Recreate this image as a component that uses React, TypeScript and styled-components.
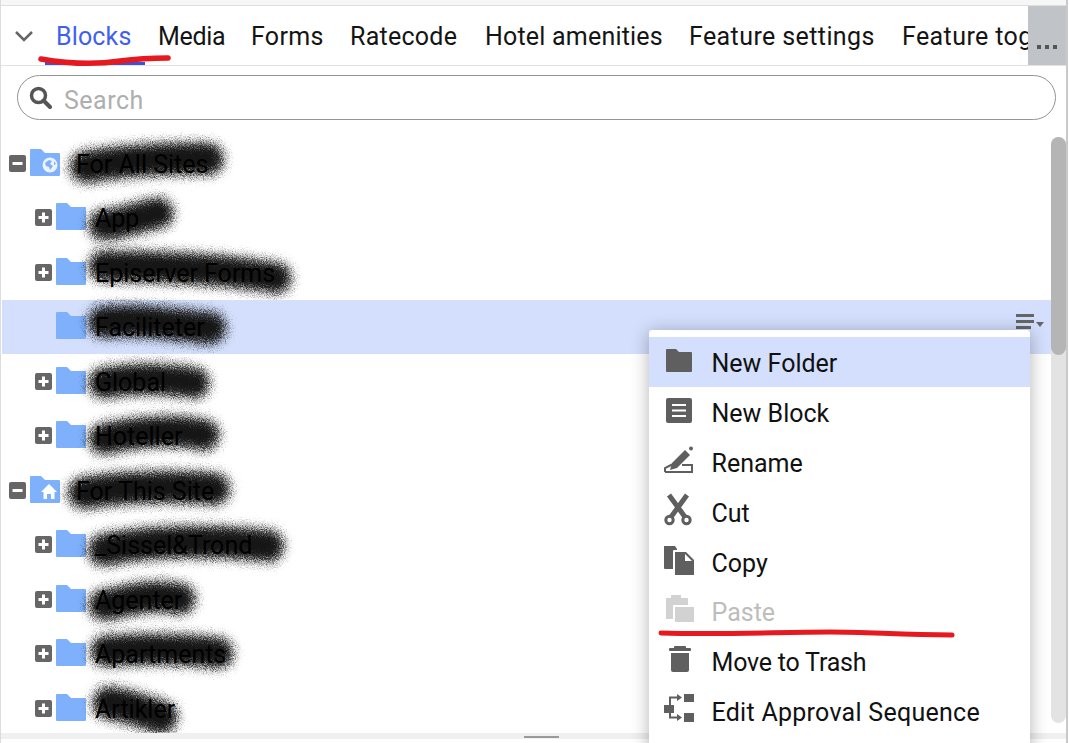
import React from "react";
import styled, { createGlobalStyle } from "styled-components";

const Global = createGlobalStyle`
  html, body { margin: 0; padding: 0; background: #fff; }
  body { font-family: Roboto, "Liberation Sans", sans-serif; }
`;

const Page = styled.div`
  position: relative;
  width: 1069px;
  height: 743px;
  overflow: hidden;
  background: #fff;
`;
const Frame = styled.div`
  width: 1068px;
  height: 743px;
  box-sizing: border-box;
  border-left: 1px solid #dcdcdc;
  border-right: 2px solid #c9c9c9;
  display: flex;
  flex-direction: column;
`;
const TopStrip = styled.div`
  height: 5px;
  flex: none;
  background: #f6f6f6;
  border-bottom: 1px solid #dedede;
`;
const TabBar = styled.div`
  position: relative;
  flex: none;
  height: 59px;
  display: flex;
  align-items: center;
  border-bottom: 1px solid #e2e2e2;
  overflow: hidden;
`;
const Chevron = styled.svg`
  flex: none;
  width: 20px;
  height: 12px;
  margin: 0 22px 0 13px;
`;
const Tab = styled.div<{ $active?: boolean; $width: number; $track: number }>`
  flex: none;
  width: ${(p) => p.$width}px;
  font-size: 25px;
  font-weight: 400;
  line-height: 61px;
  height: 59px;
  white-space: nowrap;
  letter-spacing: ${(p) => p.$track}px;
  color: ${(p) => (p.$active ? "#3f5ff0" : "#141414")};
`;
const ActiveLine = styled.div`
  position: absolute;
  left: 44px;
  bottom: 0;
  width: 100px;
  height: 3px;
  background: #3b52d9;
`;
const MoreButton = styled.div`
  position: absolute;
  right: 0;
  top: 0;
  width: 38px;
  height: 59px;
  background: #c0c4c8;
  display: flex;
  justify-content: center;
  align-items: flex-start;
  padding-top: 39px;
  box-sizing: border-box;
`;
const Dots = styled.div`
  display: flex;
  gap: 4px;
`;
const Dot = styled.span`
  width: 4px;
  height: 4px;
  background: #555;
`;
const SearchWrap = styled.div`
  flex: none;
  padding: 9px 10px 0 16px;
`;
const SearchBox = styled.div`
  height: 45px;
  box-sizing: border-box;
  border: 1px solid #949494;
  border-radius: 23px;
  display: flex;
  align-items: center;
  padding-left: 11px;
  gap: 12px;
`;
const Placeholder = styled.span`
  font-size: 25px;
  letter-spacing: 0.5px;
  color: #aeaeae;
  padding-top: 5px;
`;
const Body = styled.div`
  flex: 1;
  min-height: 0;
  display: flex;
`;
const Tree = styled.div`
  flex: 1;
  min-width: 0;
  padding: 16px 0 0 1px;
  overflow: hidden;
`;
const Row = styled.div<{ $level: number; $selected?: boolean }>`
  position: relative;
  height: 54.5px;
  display: flex;
  align-items: center;
  padding-left: ${(p) => (p.$level === 0 ? 7 : 33)}px;
  background: ${(p) => (p.$selected ? "#d3dffc" : "transparent")};
`;
const Toggle = styled.svg`
  flex: none;
  width: 17px;
  height: 17px;
`;
const ToggleSpace = styled.div`
  flex: none;
  width: 17px;
`;
const FolderIcon = styled.svg`
  flex: none;
  width: 30px;
  height: 27px;
  margin: -2px 0 0 4px;
`;
const Label = styled.div<{ $level: number }>`
  position: relative;
  margin-left: ${(p) => (p.$level === 0 ? 16 : 9)}px;
  padding-top: 2px;
  font-size: 25px;
  white-space: nowrap;
  color: #000;
`;
const LabelText = styled.span`
  position: relative;
`;
const Scribble = styled.svg`
  position: absolute;
  overflow: visible;
  pointer-events: none;
`;
const RowMenuIcon = styled.svg`
  position: absolute;
  right: 6px;
  top: 13px;
  width: 29px;
  height: 22px;
`;
const Scroll = styled.div`
  flex: none;
  width: 15px;
  margin: 17px 0 10px;
  background: #e3e3e3;
  border-radius: 8px;
`;
const Thumb = styled.div`
  height: 218px;
  background: #b5b5b5;
  border-radius: 8px;
`;
const BottomBar = styled.div`
  flex: none;
  height: 6px;
  margin-bottom: 4px;
  background: #f0f0f2;
  display: flex;
  justify-content: center;
  align-items: flex-start;
`;
const Handle = styled.div`
  width: 35px;
  height: 2px;
  margin-top: 3px;
  background: #9a9a9a;
  margin-left: 16px;
`;
const Menu = styled.div`
  position: absolute;
  left: 649px;
  top: 330px;
  width: 381px;
  height: 430px;
  padding-top: 7px;
  box-sizing: border-box;
  background: #fff;
  border-radius: 3px;
  box-shadow: 0 2px 18px rgba(0, 0, 0, 0.3);
`;
const MenuItem = styled.div<{ $hover?: boolean; $disabled?: boolean }>`
  height: 49.9px;
  display: flex;
  align-items: center;
  padding-left: 15px;
  gap: 17.5px;
  font-size: 25px;
  white-space: nowrap;
  background: ${(p) => (p.$hover ? "#d3dffc" : "transparent")};
  color: ${(p) => (p.$disabled ? "#bdbdbd" : "#111")};
`;
const MenuLabel = styled.span<{ $track?: number }>`
  padding-top: 3px;
  letter-spacing: ${(p) => p.$track ?? 0}px;
`;
const MenuIcon = styled.svg`
  flex: none;
  width: 30px;
  height: 30px;
  overflow: visible;
`;
const Ink = styled.svg`
  position: absolute;
  left: 0;
  top: 0;
  width: 1069px;
  height: 743px;
  pointer-events: none;
`;

const BLUE = "#7eb0fb";

const Folder = ({ badge }: { badge?: "globe" | "home" }) => (
  <FolderIcon viewBox="0 0 30 27">
    <path
      d="M1 0h10l4 4h14a1 1 0 0 1 1 1v21a1 1 0 0 1-1 1H1a1 1 0 0 1-1-1V1a1 1 0 0 1 1-1z"
      fill={BLUE}
    />
    {badge === "globe" && (
      <g>
        <circle cx="20" cy="16" r="7.5" fill="#fff" opacity="0.85" />
        <path d="M15 14l4-3 3 1-2 3 3 2-3 4-1-3-3-1zM24 12l2 3-2 1z" fill={BLUE} />
      </g>
    )}
    {badge === "home" && <path d="M19 8l8 8h-2.500v7h-3.500v-5h-4v5h-3.500v-7H11z" fill="#fff" />}
  </FolderIcon>
);

const ToggleBtn = ({ open }: { open?: boolean }) => (
  <Toggle viewBox="0 0 17 17">
    <rect width="17" height="17" rx="2" fill="#666" />
    <rect x="3.500" y="7" width="10" height="3" fill="#fff" />
    {!open && <rect x="7" y="3.500" width="3" height="10" fill="#fff" />}
  </Toggle>
);

type Blob = { w: number; h: number; l: number; t: number; d: string; sw: number };

const Smear = ({ w, h, l, t, d, sw }: Blob) => (
  <Scribble width={w} height={h} viewBox={`0 0 ${w} ${h}`} style={{ left: l, top: t }}>
    <path
      d={d}
      fill="none"
      stroke="#141414"
      strokeWidth={sw + 7}
      strokeLinecap="round"
      filter="url(#spray)"
    />
  </Scribble>
);

const rows: {
  name: string;
  level: number;
  open?: boolean;
  leaf?: boolean;
  selected?: boolean;
  badge?: "globe" | "home";
  blob: Blob;
}[] = [
  { name: "For All Sites", level: 0, open: true, badge: "globe", blob: { w: 170, h: 40, l: -8, t: -5, sw: 25, d: "M18 24C50 18 110 14 140 16" } },
  { name: "App", level: 1, blob: { w: 90, h: 40, l: -5, t: -5, sw: 24, d: "M14 28C35 26 55 18 68 16" } },
  { name: "Episerver Forms", level: 1, blob: { w: 205, h: 40, l: -5, t: -5, sw: 24, d: "M14 14C70 14 140 18 186 26" } },
  { name: "Faciliteter", level: 1, leaf: true, selected: true, blob: { w: 135, h: 40, l: -5, t: -5, sw: 25, d: "M14 16C50 12 90 20 120 22" } },
  { name: "Global", level: 1, blob: { w: 125, h: 40, l: -7, t: -5, sw: 24, d: "M16 22C50 16 80 18 106 22" } },
  { name: "Hoteller", level: 1, blob: { w: 135, h: 40, l: -7, t: -5, sw: 24, d: "M16 24C50 16 90 14 116 20" } },
  { name: "For This Site", level: 0, open: true, badge: "home", blob: { w: 170, h: 40, l: -8, t: -6, sw: 25, d: "M16 24C50 18 110 16 146 20" } },
  { name: "_Sissel&Trond", level: 1, blob: { w: 195, h: 40, l: -5, t: -5, sw: 25, d: "M14 26C60 16 130 16 178 22" } },
  { name: "Agenter", level: 1, blob: { w: 110, h: 40, l: -7, t: -5, sw: 24, d: "M16 26C40 22 60 14 92 20" } },
  { name: "Apartments", level: 1, blob: { w: 145, h: 40, l: -5, t: -5, sw: 24, d: "M16 18C50 15 100 16 128 20" } },
  { name: "Artikler", level: 1, blob: { w: 90, h: 44, l: -2, t: -6, sw: 26, d: "M16 16C35 18 52 26 68 30" } },
];

const G = "#5f5f5f";
const icons: Record<string, React.ReactNode> = {
  folder: <path d="M3 2h9l3 3h12a1 1 0 0 1 1 1v18a1 1 0 0 1-1 1H3a1 1 0 0 1-1-1V3a1 1 0 0 1 1-1z" fill={G} />,
  block: (
    <g>
      <rect x="2" y="1" width="26" height="25" rx="2" fill={G} />
      <rect x="8" y="7" width="14" height="2" fill="#fff" />
      <rect x="8" y="12.500" width="14" height="2" fill="#fff" />
      <rect x="8" y="18" width="14" height="2" fill="#fff" />
    </g>
  ),
  rename: (
    <g>
      <path d="M1 25v-4l7-3.500M1 25h27v-7h-10" fill="none" stroke={G} strokeWidth="2" />
      <path d="M6 23l2-7L21 3l5 5-13 13z" fill={G} />
      <circle cx="27" cy="1.500" r="2" fill={G} />
    </g>
  ),
  cut: (
    <g>
      <path d="M5 -2l16 22M23 -2L7 20" stroke={G} strokeWidth="5" fill="none" />
      <circle cx="5.500" cy="23" r="3.700" fill="none" stroke={G} strokeWidth="3" />
      <circle cx="22.500" cy="23" r="3.700" fill="none" stroke={G} strokeWidth="3" />
    </g>
  ),
  copy: (
    <g>
      <path d="M0 -1h11l2 3v1H10a1 1 0 0 0-1 1v18H1a1 1 0 0 1-1-1z" fill={G} />
      <path d="M11 5h11l8 8v15H11z" fill={G} />
      <path d="M21 7l7 7h-7z" fill="#fff" />
    </g>
  ),
  paste: (
    <g fill="#d2d2d2">
      <path d="M2 2h5v-3h10v3h7v7H9v14H2z" />
      <rect x="11" y="11" width="19" height="15" />
    </g>
  ),
  trash: (
    <g fill={G}>
      <rect x="5" y="2" width="22" height="3" rx="1" />
      <rect x="10" y="0" width="12" height="3" rx="1" />
      <path d="M7 7h18v17a2 2 0 0 1-2 2H9a2 2 0 0 1-2-2z" />
    </g>
  ),
  approval: (
    <g fill={G}>
      <rect x="20" y="-2" width="10" height="8" />
      <rect x="0" y="9" width="10" height="8" />
      <rect x="20" y="17" width="10" height="9" />
      <path d="M6 9V1.500h9" fill="none" stroke={G} strokeWidth="2" />
      <path d="M13 -2l5 3.500-5 3.500z" />
      <path d="M6 17v4.500h9" fill="none" stroke={G} strokeWidth="2" />
      <path d="M13 18l5 3.500-5 3.500z" />
    </g>
  ),
};

const menu: { icon: string; text: string; hover?: boolean; disabled?: boolean; track?: number }[] = [
  { icon: "folder", text: "New Folder", hover: true },
  { icon: "block", text: "New Block" },
  { icon: "rename", text: "Rename" },
  { icon: "cut", text: "Cut" },
  { icon: "copy", text: "Copy" },
  { icon: "paste", text: "Paste", disabled: true },
  { icon: "trash", text: "Move to Trash", track: -0.2 },
  { icon: "approval", text: "Edit Approval Sequence", track: 0.27 },
];

const tabs = [
  { text: "Blocks", width: 102, track: 0.15 },
  { text: "Media", width: 93, track: -0.3 },
  { text: "Forms", width: 99, track: 0.3 },
  { text: "Ratecode", width: 135, track: 0.25 },
  { text: "Hotel amenities", width: 204, track: 0.2 },
  { text: "Feature settings", width: 213, track: 0.4 },
  { text: "Feature toggle", width: 200, track: 0.4 },
];

export default function App() {
  return (
    <Page>
      <Global />
      <svg width="0" height="0" style={{ position: "absolute" }}>
        <defs>
          <filter id="spray" filterUnits="userSpaceOnUse" x="-60" y="-60" width="360" height="170">
            <feGaussianBlur stdDeviation="5" result="b" />
            <feTurbulence type="fractalNoise" baseFrequency="1.1" numOctaves="2" seed="4" result="n" />
            <feDisplacementMap in="b" in2="n" scale="16" xChannelSelector="R" yChannelSelector="G" />
          </filter>
        </defs>
      </svg>
      <Frame>
        <TopStrip />
        <TabBar>
          <Chevron viewBox="0 0 20 12">
            <path d="M2 2l8 8 8-8" fill="none" stroke="#666" strokeWidth="2.500" />
          </Chevron>
          {tabs.map((t, i) => (
            <Tab key={t.text} $active={i === 0} $width={t.width} $track={t.track}>
              {t.text}
            </Tab>
          ))}
          <ActiveLine />
          <MoreButton>
            <Dots>
              <Dot />
              <Dot />
              <Dot />
            </Dots>
          </MoreButton>
        </TabBar>
        <SearchWrap>
          <SearchBox>
            <svg width="23" height="23" viewBox="0 0 23 23">
              <circle cx="9.500" cy="9.500" r="7" fill="none" stroke="#555" strokeWidth="3.500" />
              <path d="M14.500 14.500l6.500 6.500" stroke="#555" strokeWidth="4" strokeLinecap="round" />
            </svg>
            <Placeholder>Search</Placeholder>
          </SearchBox>
        </SearchWrap>
        <Body>
          <Tree>
            {rows.map((r) => (
              <Row key={r.name} $level={r.level} $selected={r.selected}>
                {r.leaf ? <ToggleSpace /> : <ToggleBtn open={r.open} />}
                <Folder badge={r.badge} />
                <Label $level={r.level}>
                  <Smear {...r.blob} />
                  <LabelText>{r.name}</LabelText>
                </Label>
                {r.selected && (
                  <RowMenuIcon viewBox="0 0 29 22">
                    <rect x="0" y="1" width="18" height="3" fill="#666" />
                    <rect x="0" y="7" width="18" height="3" fill="#666" />
                    <rect x="0" y="13" width="15" height="3" fill="#666" />
                    <path d="M20 9h8l-4 5z" fill="#666" />
                  </RowMenuIcon>
                )}
              </Row>
            ))}
          </Tree>
          <Scroll>
            <Thumb />
          </Scroll>
        </Body>
        <BottomBar>
          <Handle />
        </BottomBar>
      </Frame>
      <Menu>
        {menu.map((m) => (
          <MenuItem key={m.text} $hover={m.hover} $disabled={m.disabled}>
            <MenuIcon viewBox="0 0 30 30">{icons[m.icon]}</MenuIcon>
            <MenuLabel $track={m.track}>{m.text}</MenuLabel>
          </MenuItem>
        ))}
      </Menu>
      <Ink viewBox="0 0 1069 743">
        <path
          d="M41 59C70 64 95 65 120 61C135 59 155 58 168 58"
          fill="none"
          stroke="#e5191f"
          strokeWidth="5.500"
          strokeLinecap="round"
        />
        <path
          d="M661 633C720 635 780 632 830 632C870 632 900 635 952 635"
          fill="none"
          stroke="#e5191f"
          strokeWidth="5"
          strokeLinecap="round"
        />
      </Ink>
    </Page>
  );
}
